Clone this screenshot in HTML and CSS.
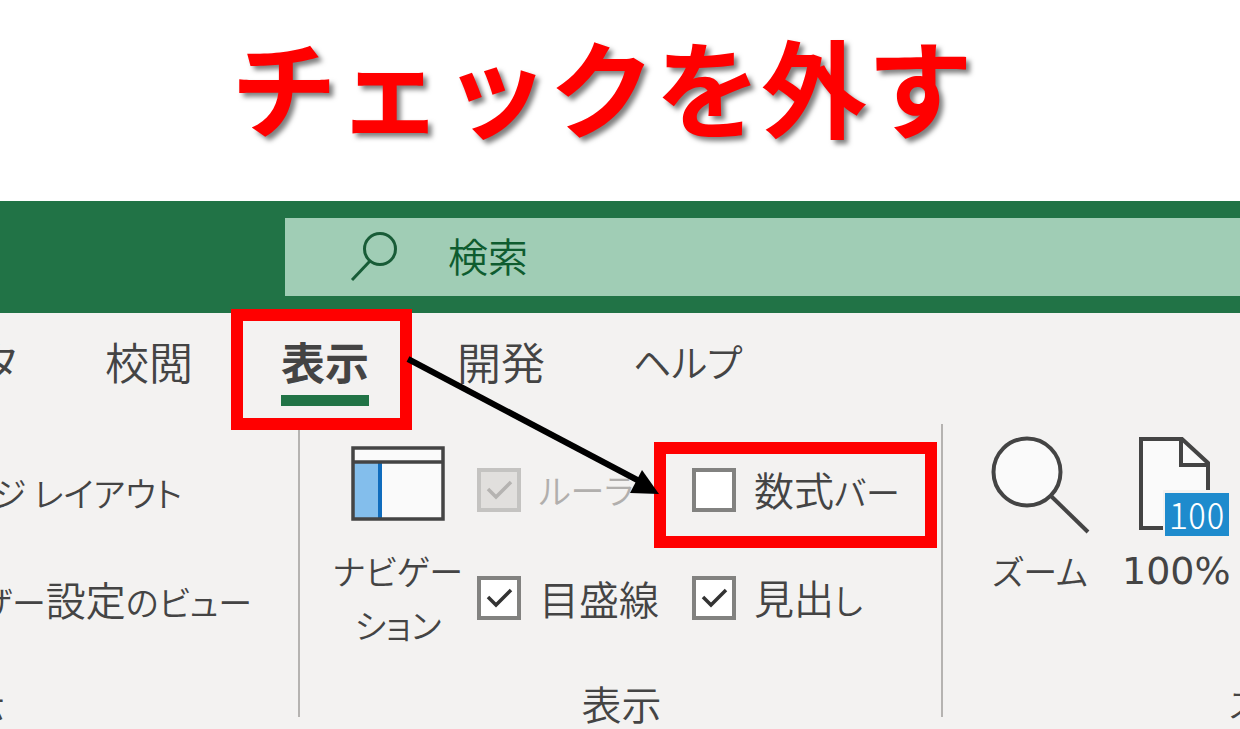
FILE: index.html
```html
<!DOCTYPE html>
<html lang="ja">
<head>
  <meta charset="UTF-8" />
  <meta name="viewport" content="width=device-width, initial-scale=1.0"/>
  <title>チェックを外す</title>
  <link rel="stylesheet" href="styles.css">
</head>
<body>
  <h1>チェックを外す</h1>

  <div class="title-bar">
    <label class="search">
      <svg class="search-icon" viewBox="0 0 48 50" aria-hidden="true">
        <ellipse cx="30" cy="17" rx="15.500" ry="15.500"/>
        <path d="M20 29 L2 48"/>
      </svg>
      <input type="search" placeholder="検索" aria-label="検索">
    </label>
  </div>

  <main class="ribbon">
    <nav class="tabs">
      <span class="tab-clip"><a href="#data">データ</a></span>
      <a href="#review">校閲</a>
      <a href="#view" class="active">表示</a>
      <a href="#developer">開発</a>
      <a href="#help" class="help">ヘルプ</a>
    </nav>

    <div class="groups">
      <section class="group book-views">
        <div class="view-list">
          <button class="page-layout kana">ページ レイアウト</button>
          <button class="custom-views"><span class="kana">ユーザー</span>設定<span class="kana">のビュー</span></button>
        </div>
        <h2><span class="kana">ブックの</span>表示</h2>
      </section>

      <section class="group show">
        <div class="tools">
          <button class="big-button navigation">
            <svg class="nav-icon" viewBox="0 0 94 76" aria-hidden="true">
              <rect x="2" y="2" width="90" height="72" fill="#fafafa"/>
              <rect x="2" y="16" width="27" height="58" fill="#83beec"/>
              <path d="M29 16 V74" stroke="#0f6cbd" stroke-width="4"/>
              <path d="M2 2 H92 V73 H2 Z M2 16 H92" fill="none" stroke="#444" stroke-width="3.500"/>
            </svg>
            <span class="kana">ナビゲー<br>ション</span>
          </button>
          <div class="checks">
            <label><input type="checkbox" checked disabled><span class="kana">ルーラー</span></label>
            <label class="marked"><input type="checkbox"><span>数式<span class="kana">バー</span></span></label>
            <label><input type="checkbox" checked>目盛線</label>
            <label><input type="checkbox" checked><span>見出<span class="kana">し</span></span></label>
          </div>
        </div>
        <h2>表示</h2>
      </section>

      <section class="group zoom">
        <div class="tools">
          <button class="big-button">
            <svg class="zoom-icon" viewBox="0 0 100 100" aria-hidden="true">
              <circle cx="37" cy="36" r="33.500" fill="#fafafa" stroke="#444" stroke-width="4"/>
              <path d="M61 60 L98 96" stroke="#444" stroke-width="4"/>
            </svg>
            <span class="kana">ズーム</span>
          </button>
          <button class="big-button">
            <svg class="page-icon" viewBox="0 0 108 100" aria-hidden="true">
              <path d="M19 3 H60 L86 27 V92 H19 Z" fill="#fafafa"/>
              <path d="M41 92 H19 V3 H60 L86 27 V54 M59 3 V29 H86" fill="none" stroke="#444" stroke-width="4"/>
              <rect x="41" y="54" width="67" height="46" fill="#f3f2f1"/>
              <rect x="43" y="57" width="64" height="43" fill="#1e8bcd"/>
              <text x="75" y="93" text-anchor="middle">100</text>
            </svg>
            <span class="percent">100%</span>
          </button>
        </div>
        <h2 class="kana">ズーム</h2>
      </section>
    </div>
  </main>

  <svg class="arrow" viewBox="0 0 260 140" aria-hidden="true">
    <path d="M5 4 L240 128" stroke="#000" stroke-width="6"/>
    <path d="M239 115 L256 139 L227 138 Z"/>
  </svg>
</body>
</html>
```

FILE: styles.css
```css
* {
  box-sizing: border-box;
}
body {
  position: relative;
  margin: 0;
  min-height: 100vh;
  overflow: hidden;
  background: #fff;
  color: #444;
  font-family: "Noto Sans CJK JP", sans-serif;
  font-size: 40px;
  font-weight: 350;
  line-height: 54px;
  font-feature-settings: "palt";
}
h1 {
  margin: 0;
  padding: 12px 36px 0 0;
  height: 201px;
  text-align: center;
  color: #f00;
  font-size: 106px;
  font-weight: 700;
  line-height: 144px;
  font-feature-settings: normal;
  text-shadow: 4px 4px 5px rgba(0, 0, 0, 0.5);
}
button {
  padding: 0;
  border: 0;
  background: none;
  color: inherit;
  font: inherit;
  font-feature-settings: inherit;
  white-space: nowrap;
}
a {
  color: inherit;
  text-decoration: none;
}

/* title bar */
.title-bar {
  padding: 17px 0 17px 285px;
  background: #217346;
}
.search {
  display: flex;
  align-items: center;
  gap: 50px;
  height: 78px;
  padding-left: 65px;
  background: #a0cdb5;
}
.search-icon {
  flex: none;
  width: 48px;
  height: 50px;
  fill: none;
  stroke: #185c37;
  stroke-width: 3;
}
.search input {
  flex: 1;
  min-width: 0;
  padding: 0 0 4px;
  border: 0;
  outline: 0;
  background: none;
  color: #0e5c2f;
  font: inherit;
}
.search input::placeholder {
  color: #0e5c2f;
}

/* ribbon */
.ribbon {
  background: #f3f2f1;
}
.tabs {
  display: flex;
  gap: 88px;
  height: 111px;
  padding-top: 16px;
  font-size: 44px;
  line-height: 64px;
  white-space: nowrap;
}
.tab-clip {
  display: flex;
  justify-content: flex-end;
  width: 17px;
  overflow: hidden;
}
.help {
  font-size: 38px;
}
.active {
  position: relative;
  height: 77px;
  border-bottom: 11px solid #217346;
  font-weight: 700;
}
.active::after,
.marked::after {
  content: "";
  position: absolute;
  z-index: 1;
  border: 12px solid #f00;
}
.active::after {
  inset: -20px -43px -35px -50px;
}
.groups {
  display: flex;
  height: 305px;
  overflow: hidden;
}
.group {
  position: relative;
  display: flex;
  flex: none;
  flex-direction: column;
  justify-content: space-between;
}
.group h2 {
  margin: 0;
  font-size: 40px;
  font-weight: 350;
  line-height: 52px;
  text-align: center;
  white-space: nowrap;
}
.kana,
.group h2.kana {
  font-size: 34px;
}
.book-views,
.show {
  background: linear-gradient(#b5b3b1, #b5b3b1) right top / 2px 293px no-repeat;
}
.book-views {
  width: 300px;
}
.view-list {
  display: flex;
  flex-direction: column;
  align-items: flex-end;
  gap: 52px;
  padding-top: 42px;
}
.page-layout {
  margin-right: 118px;
}
.custom-views {
  margin-right: 48px;
}
.book-views h2 {
  align-self: flex-start;
  display: flex;
  justify-content: flex-end;
  width: 5px;
}
.show {
  width: 643px;
}
.tools {
  display: flex;
}
.big-button {
  display: flex;
  flex-direction: column;
  align-items: center;
}
.navigation {
  width: 124px;
  margin: 22px 17px 0 36px;
}
.nav-icon {
  width: 94px;
  height: 76px;
  margin-bottom: 22px;
}
.checks {
  display: grid;
  grid-template-columns: 215px auto;
  grid-auto-rows: 44px;
  row-gap: 64px;
  padding-top: 44px;
}
.checks label {
  position: relative;
  display: flex;
  align-items: center;
  gap: 18px;
  white-space: nowrap;
}
.checks input {
  appearance: none;
  flex: none;
  width: 44px;
  height: 44px;
  margin: 0;
  border: 4px solid #828280;
  background: #fff;
}
.checks input:checked {
  background: #fff url("data:image/svg+xml,%3Csvg xmlns='http://www.w3.org/2000/svg' viewBox='0 0 36 36'%3E%3Cpath d='M7 17 L15 25 L30 10' fill='none' stroke='%23333' stroke-width='3.500'/%3E%3C/svg%3E") center / 36px;
}
.checks input:disabled {
  border-color: #c4c3c1;
  background: #e1dfdd url("data:image/svg+xml,%3Csvg xmlns='http://www.w3.org/2000/svg' viewBox='0 0 36 36'%3E%3Cpath d='M7 17 L15 25 L30 10' fill='none' stroke='%23b5b3b1' stroke-width='3.500'/%3E%3C/svg%3E") center / 36px;
}
.checks label:has(input:disabled) {
  color: #b1afad;
}
.marked::after {
  inset: -26px -37px -36px -38px;
}
.zoom {
  width: 668px;
}
.zoom .tools {
  gap: 32px;
  padding: 12px 0 0 47px;
}
.zoom-icon,
.page-icon {
  width: 100px;
  height: 100px;
  margin-bottom: 8px;
}
.page-icon {
  width: 108px;
}
.page-icon text {
  fill: #fff;
  font-size: 37px;
  font-weight: 300;
  font-feature-settings: "hwid";
}
.percent {
  font-family: "DejaVu Sans", sans-serif;
  font-size: 38px;
  font-weight: 400;
}

/* pointer from the tab to the option */
.arrow {
  position: absolute;
  z-index: 2;
  top: 355px;
  left: 403px;
  width: 260px;
  height: 140px;
}
```
